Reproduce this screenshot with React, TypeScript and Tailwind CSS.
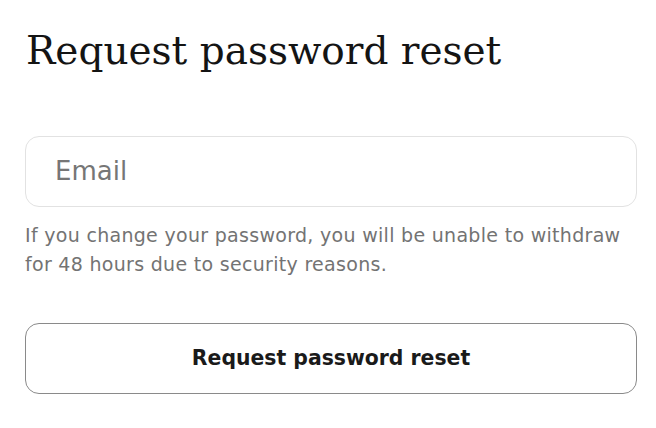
const App = () => {
  return (
    <div className="w-[656px] h-[428px] bg-white px-[25px] pt-[23px] font-['DejaVu_Sans',sans-serif]">
      <h1 className="font-['DejaVu_Serif',serif] text-[39px] leading-[56px] text-[#141414] ml-[1px]">
        Request password reset
      </h1>

      {/* Email field */}
      <div className="mt-[57px] w-[612px] h-[71px] rounded-[14px] border border-[#e2e2e2] flex items-center px-[29px]">
        <input
          type="email"
          placeholder="Email"
          className="w-full bg-transparent outline-none text-[26px] text-[#1a1a1a] placeholder:text-[#767676]"
        />
      </div>
      <p className="mt-[14px] text-[19px] leading-[29px] tracking-[0.3px] text-[#737373]">
        If you change your password, you will be unable to withdraw
        <br />
        for 48 hours due to security reasons.
      </p>

      <button className="mt-[44px] w-[612px] h-[71px] rounded-[14px] border-[1.5px] border-[#8a8a8a] text-[20.4px] font-bold text-[#1a1a1a]">
        Request password reset
      </button>
    </div>
  );
};

export default App;
